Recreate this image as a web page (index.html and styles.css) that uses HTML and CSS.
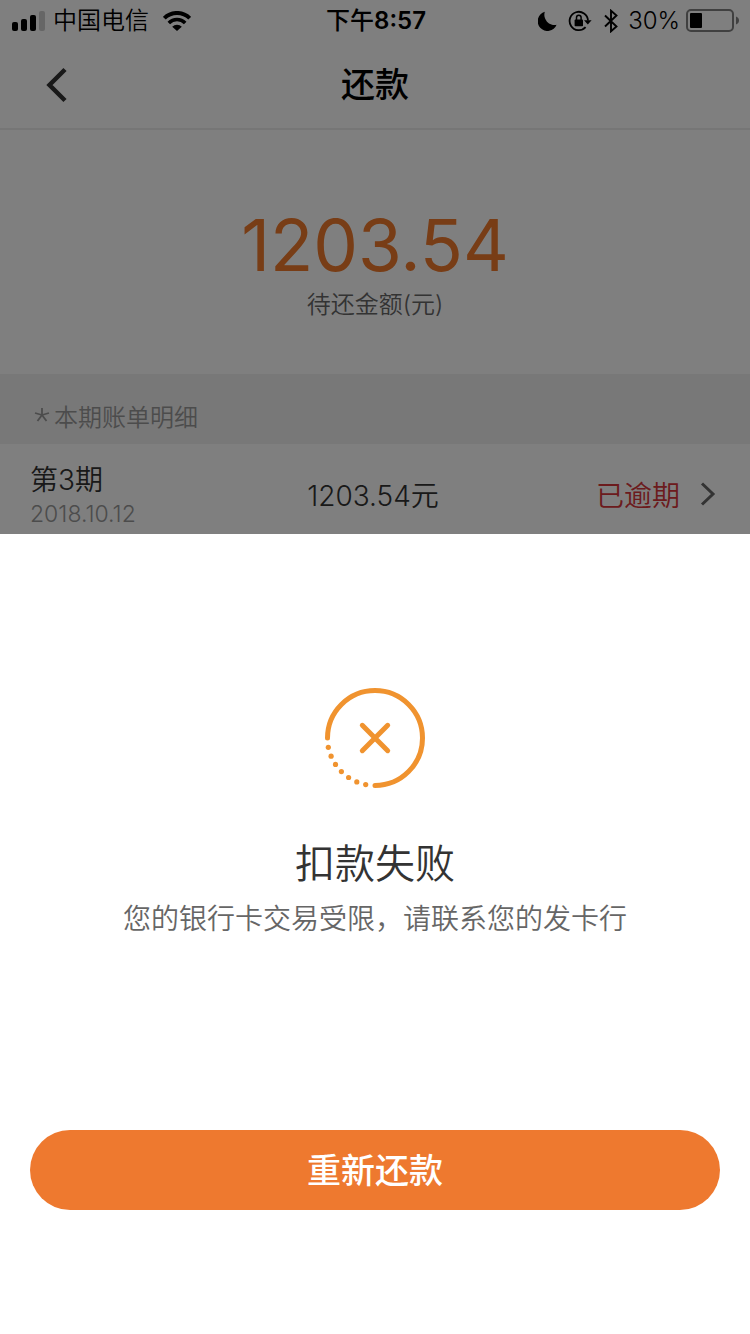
FILE: index.html
```html
<!DOCTYPE html>
<html lang="zh-CN">
<head>
<meta charset="utf-8">
<meta name="viewport" content="width=device-width, initial-scale=1">
<title>还款</title>
<link rel="stylesheet" href="styles.css">
</head>
<body>
<div class="page">
  <div class="status">
    <div class="status-left">
      <svg class="signal" width="34" height="20" viewBox="0 0 34 20" aria-hidden="true">
        <rect x="0" y="11" width="6" height="9" rx="2"/>
        <rect x="9" y="8" width="6" height="12" rx="2"/>
        <rect x="18" y="4" width="6" height="16" rx="2"/>
        <rect x="27" y="0" width="6" height="20" rx="2" fill="#000" fill-opacity=".2"/>
      </svg>
      <span class="carrier">中国电信</span>
      <svg class="wifi" width="28" height="20" viewBox="0 0 28 20" aria-hidden="true">
        <path d="M1.300 7.200a18 18 0 0 1 25.400 0" fill="none" stroke="#000" stroke-width="4"/>
        <path d="M5.800 11.900a11.600 11.600 0 0 1 16.400 0" fill="none" stroke="#000" stroke-width="3.600"/>
        <path d="M9.200 15.700a6.800 6.800 0 0 1 9.600 0L14 20z"/>
      </svg>
    </div>
    <div class="clock">下午<b>8:57</b></div>
    <div class="status-right">
      <svg width="20" height="20" viewBox="0 0 20 20" aria-hidden="true">
        <path d="M6.800.8A9.800 9.800 0 1 0 18.600 13.800 10.200 10.200 0 0 1 6.800.8z"/>
      </svg>
      <svg class="lock" width="24" height="22" viewBox="0 0 24 22" aria-hidden="true">
        <path d="M17.600 17.200A9.200 9.200 0 1 1 20 10.500" fill="none" stroke="#000" stroke-width="1.800"/>
        <path d="M16 10.200h7.600l-3.800 4.200z"/>
        <rect x="6.600" y="9.600" width="8.400" height="6.600" rx=".8"/>
        <path d="M8.500 10V7.500a2.300 2.300 0 0 1 4.600 0V10" fill="none" stroke="#000" stroke-width="1.500"/>
      </svg>
      <svg class="bluetooth" width="14" height="24" viewBox="0 0 14 24" aria-hidden="true">
        <path d="M1 6.500l11.500 11L7 22.300V1.700l5.500 4.800L1 17.500" fill="none" stroke="#000" stroke-width="1.900"/>
      </svg>
      <span class="percent">30%</span>
      <svg class="battery" width="54" height="24" viewBox="0 0 54 24" aria-hidden="true">
        <rect x="1" y="1" width="46" height="21" rx="4" fill="none" stroke="#808080" stroke-width="2"/>
        <rect x="4" y="4" width="12" height="15" rx="1"/>
        <path d="M50 7.500c4 1.200 4 6.800 0 8z" fill="#808080"/>
      </svg>
    </div>
  </div>

  <header class="nav">
    <button class="back" type="button" aria-label="返回">
      <svg width="22" height="36" viewBox="0 0 22 36" aria-hidden="true">
        <path d="M20 2.500L4.500 18 20 33.500" fill="none" stroke="#333" stroke-width="4.500"/>
      </svg>
    </button>
    <h1 class="nav-title">还款</h1>
  </header>

  <section class="summary">
    <div class="amount">1203.54</div>
    <div class="amount-label">待还金额(元)</div>
  </section>

  <h2 class="section-title">
    <svg width="16" height="16" viewBox="0 0 16 16" aria-hidden="true">
      <path d="M8 8V1M8 8L1 6M8 8l7-2M8 8l-4.500 6M8 8l4.500 6" fill="none" stroke="#999" stroke-width="1.800"/>
    </svg>
    本期账单明细
  </h2>

  <a class="bill" href="#bill">
    <span class="bill-period">
      <span class="bill-name">第3期</span>
      <span class="bill-date">2018.10.12</span>
    </span>
    <span class="bill-amount">1203.54元</span>
    <span class="bill-state">
      已逾期
      <svg width="16" height="24" viewBox="0 0 16 24" aria-hidden="true">
        <path d="M2 1.500L13 12 2 22.500" fill="none" stroke="#666" stroke-width="3"/>
      </svg>
    </span>
  </a>
</div>

<div class="overlay">
  <div class="sheet" role="dialog" aria-modal="true" aria-labelledby="result-title">
    <svg class="result-icon" width="104" height="104" viewBox="0 0 104 104" aria-hidden="true">
      <g fill="none" stroke="#f0932f" stroke-width="5" stroke-linecap="round">
        <path d="M4.500 52A47.500 47.500 0 1 1 52 99.500"/>
        <path d="M39.300 39.300l25.400 25.400M64.700 39.300L39.300 64.700"/>
      </g>
      <g fill="#f0932f">
        <circle cx="5.300" cy="61.300" r="2.600"/>
        <circle cx="8.100" cy="70.200" r="2.600"/>
        <circle cx="12.500" cy="78.400" r="2.600"/>
        <circle cx="18.400" cy="85.600" r="2.600"/>
        <circle cx="25.600" cy="91.500" r="2.600"/>
        <circle cx="33.800" cy="95.900" r="2.600"/>
        <circle cx="42.700" cy="98.600" r="2.600"/>
      </g>
    </svg>
    <h2 class="result-title" id="result-title">扣款失败</h2>
    <p class="result-text">您的银行卡交易受限，请联系您的发卡行</p>
    <button class="retry" type="button">重新还款</button>
  </div>
</div>
</body>
</html>
```
FILE: styles.css
```css
* {
  box-sizing: border-box;
}

body {
  margin: 0;
  background: #fff;
  color: #333;
  font-family: Inter, "Noto Sans CJK SC", sans-serif;
  font-weight: 350;
}

h1,
h2,
p {
  margin: 0;
  font-weight: inherit;
}

button {
  padding: 0;
  border: 0;
  font: inherit;
  cursor: pointer;
}

svg {
  display: block;
  flex: none;
}

.status {
  display: grid;
  grid-template-columns: 1fr auto 1fr;
  align-items: center;
  height: 42px;
  padding: 0 10px 0 12px;
  color: #000;
  font-size: 24px;
  line-height: 42px;
}

.status-left,
.status-right {
  display: flex;
  align-items: center;
}

.signal {
  margin-right: 7px;
}

.wifi {
  margin-left: 14px;
}

.clock {
  font-weight: 500;
}

.clock b {
  font-weight: 600;
}

.status-right {
  justify-content: flex-end;
}

.lock {
  margin-left: 10px;
}

.bluetooth {
  margin: 0 10px 0 12px;
}

.battery {
  margin-left: 6px;
}

.nav {
  display: grid;
  grid-template-columns: 1fr auto 1fr;
  align-items: center;
  height: 88px;
  padding: 0 45px;
  border-bottom: 2px solid #ececec;
}

.back {
  justify-self: start;
  background: none;
}

.nav .nav-title {
  color: #000;
  font-size: 34px;
  font-weight: 500;
  line-height: 48px;
}

.summary {
  padding: 73px 30px 52px;
  text-align: center;
}

.amount {
  color: #f07a2c;
  font-size: 71px;
  font-weight: 400;
  line-height: 84px;
}

.amount-label {
  color: #666;
  font-size: 24px;
  line-height: 35px;
}

.section-title {
  display: flex;
  align-items: center;
  gap: 4px;
  height: 70px;
  padding: 12px 34px 0;
  background: #f0f0f0;
  color: #999;
  font-size: 24px;
}

.bill {
  display: grid;
  grid-template-columns: 1fr auto 1fr;
  align-items: center;
  padding: 16px 34px 6px 30px;
  color: #333;
  font-size: 28px;
  text-decoration: none;
}

.bill-period {
  display: flex;
  flex-direction: column;
}

.bill-name {
  line-height: 40px;
}

.bill-date {
  color: #999;
  font-size: 23px;
  line-height: 28px;
}

.bill-state {
  display: flex;
  align-items: center;
  justify-content: flex-end;
  gap: 20px;
  color: #d8363a;
}

.overlay {
  position: fixed;
  inset: 0;
  display: flex;
  flex-direction: column;
  justify-content: flex-end;
  background: rgba(0, 0, 0, 0.5);
}

.sheet {
  display: flex;
  flex-direction: column;
  align-items: center;
  padding: 152px 30px 124px;
  background: #fff;
}

.result-title {
  margin-top: 44px;
  font-size: 40px;
  line-height: 60px;
}

.result-text {
  margin-top: 4px;
  color: #666;
  font-size: 28px;
  line-height: 42px;
}

.retry {
  width: 100%;
  height: 80px;
  margin-top: 190px;
  padding-bottom: 4px;
  border-radius: 40px;
  background: #ee792f;
  color: #fff;
  font-size: 34px;
  font-weight: 500;
}
```
